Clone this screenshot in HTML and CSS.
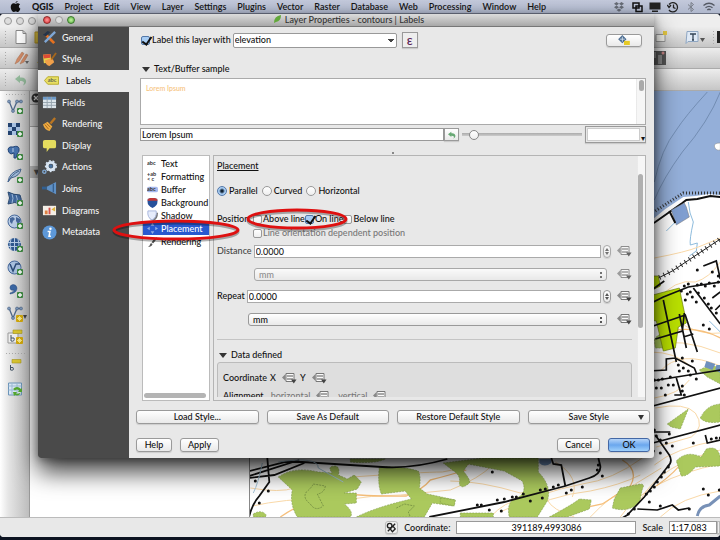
FILE: index.html
```html
<!DOCTYPE html>
<html lang="en">
<head>
<meta charset="utf-8">
<title>Layer Properties - contours | Labels</title>
<link rel="stylesheet" href="styles.css">
</head>
<body>
<svg class="defs" aria-hidden="true">
  <defs>
    <symbol id="plus" viewBox="0 0 6 6"><rect width="6" height="6" rx="1" fill="#3f8a43"/><path d="M3 1v4M1 3h4" stroke="#fff" stroke-width="1.4"/></symbol>
    <symbol id="star" viewBox="0 0 7 7"><rect width="7" height="7" rx="1" fill="#d3a90c"/><path d="M3.5 1v5M1 3.5h5M2 2l3 3M5 2l-3 3" stroke="#fff6a0" stroke-width=".8"/></symbol>
    <symbol id="override" viewBox="0 0 16 14"><path d="M5 2.500h8v8H5z" fill="#fafafa" stroke="#777"/><path d="M4.500 3v7L1 6.500z" fill="#888"/><path d="M6 5h6M6 8h6" stroke="#555"/><path d="M10 8.500h5.500L12.800 12.500z" fill="#444"/></symbol>
    <symbol id="vnode" viewBox="0 0 16 16"><path d="M2 2l4 10L10 2.500h4" fill="none" stroke="#50698c" stroke-width="1.300"/><g fill="#7d98ba" stroke="#3c5476" stroke-width=".5"><circle cx="2" cy="2.500" r="1.500"/><circle cx="6" cy="12" r="1.500"/><circle cx="10" cy="2.500" r="1.500"/><circle cx="14" cy="2.500" r="1.500"/></g></symbol>
    <symbol id="globe" viewBox="0 0 16 16"><circle cx="7.500" cy="7.500" r="6.500" fill="#b9cde6" stroke="#47699c"/><path d="M3 4l3-1 2 2-2 2-1 3-2-2zM9 3l4 2v3l-2 2-2-3z" fill="#47699c"/></symbol>
    <symbol id="undo" viewBox="0 0 14 12"><path d="M1 5l5-4v2.500c7-1 8 6 3 8 2-3 1-4.500-3-4.500V9z" fill="#67a874"/></symbol>
  </defs>
</svg>

<nav class="menubar">
  <svg class="apple" viewBox="0 0 12 12"><path d="M8.500 0C8 1 7 2 6 2.200 6 1 7 .2 8.500 0zM6 3c1 0 1.500-.7 2.800-.6C10 2.500 10.500 3 11 3.600 9 5 9.300 7.500 11.300 8.400 10.600 10 9.700 12 8.500 12 7.500 12 7.200 11.400 6.200 11.400S4.800 12 4 12C2.400 12 .8 8.800.8 6.600.8 4 2.300 2.500 4 2.500 5 2.500 5.500 3 6 3z" fill="#111"/></svg>
  <a class="app" href="#">QGIS</a><a href="#">Project</a><a href="#">Edit</a><a href="#">View</a><a href="#">Layer</a><a href="#">Settings</a><a href="#">Plugins</a><a href="#">Vector</a><a href="#">Raster</a><a href="#">Database</a><a href="#">Web</a><a href="#">Processing</a><a href="#">Window</a><a href="#">Help</a>
  <span class="tray">
    <svg viewBox="0 0 12 12"><path d="M3.500 1L6 2.700 3.500 4.500 1 2.800zM8.500 1L11 2.800 8.500 4.500 6 2.700zM3.500 4.500L6 6.200 3.500 8 1 6.200zM8.500 4.500L11 6.200 8.500 8 6 6.200zM6 7.500l2.500 1.500L6 10.800 3.500 9z" fill="#666b75"/></svg>
    <svg viewBox="0 0 12 12"><path d="M2 2h6v5H2zM5 5h6v5.500H5z" fill="none" stroke="#111" stroke-width="1.500"/></svg>
    <svg viewBox="0 0 12 12"><path d="M.5 1.500h11v7H.5zM3 9.500h6V11H3z" fill="#222"/></svg>
    <svg viewBox="0 0 12 12"><path d="M2 3.500A4.700 4.700 0 1 1 2 9M.2 4L2 6.500 4 4M6.500 3.500v3l2 1" fill="none" stroke="#222" stroke-width="1.300"/></svg>
    <svg viewBox="0 0 12 12"><path d="M3 3.500l5.500 5L6 10.500v-9L8.500 3.500 3 8.500" fill="none" stroke="#777c86"/></svg>
    <svg viewBox="0 0 12 12"><path d="M.5 4.500q5.500-4.500 11 0M2.500 6.800q3.500-3 7 0M4.300 9q1.700-1.500 3.400 0" fill="none" stroke="#555a64" stroke-width="1.300"/></svg>
  </span>
</nav>

<div class="appwin">
  <div class="apptitle"><i class="light"></i><i class="light"></i><i class="light"></i></div>
  <div class="bar">
    <i class="grip"></i>
    <svg width="14" height="16" viewBox="0 0 14 16"><path d="M2 1.500h7l3 3v10H2z" fill="#fff" stroke="#888"/><path d="M9 1.500v3h3" fill="none" stroke="#888"/></svg>
    <svg width="14" height="14" viewBox="0 0 14 14"><path d="M1 2h5l1 2h6v9H1z" fill="#e5c944" stroke="#b99a25"/></svg>
    <span class="push"></span>
    <svg width="14" height="14" viewBox="0 0 14 14"><path d="M2 4.500h9v7H2z" fill="#f4f4f0" stroke="#999"/><path d="M9 1h4v4H9z" fill="#e5c944"/></svg>
    <svg class="text-tool" width="22" height="16" viewBox="0 0 22 16"><path d="M3 2.500h11v10H4l-2 2z" fill="#dfe9f5" stroke="#8ea6c2"/><path d="M6 5h6M9 5v6M8 11h2" stroke="#345" stroke-width="1.300"/><path d="M16 9h5l-2.500 4z" fill="#555"/></svg>
    <i class="grip"></i><i class="dark-chip"></i>
  </div>
  <div class="bar">
    <i class="grip"></i>
    <svg width="16" height="14" viewBox="0 0 16 14"><path d="M1 13l2-5 5-7 2 1.500-5 8zM6 13l2-4 4-6 2 1-4 7z" fill="#d58d69" stroke="#a97455" stroke-width=".5"/><path d="M11 10h4l-2 3z" fill="#666"/></svg>
    <svg width="10" height="14" viewBox="0 0 10 14"><path d="M1 12l6-8 2 8z" fill="#cdb84a"/></svg>
    <span class="push"></span>
    <svg class="raster-tool" width="16" height="14" viewBox="0 0 16 14"><path d="M0 0h16v14H0z" fill="#555"/><path d="M2 1h4v6H2zM8 4h4v9H8z" fill="#8a8a8a"/><circle cx="13" cy="2" r="1.500" fill="#c88"/></svg>
  </div>
  <div class="bar">
    <i class="grip"></i>
    <svg class="faded" width="14" height="12"><use href="#undo"/></svg>
  </div>

  <div class="workspace">
    <div class="strip">
      <i class="hgrip"></i>
      <svg viewBox="0 0 16 16"><use href="#vnode"/><use href="#plus" x="10" y="9" width="6" height="6"/></svg>
      <svg viewBox="0 0 16 16"><path d="M1 1h12v12H1z" fill="#a9c3e4"/><path d="M1 1h4v4H1zM9 1h4v4H9zM5 5h4v4H5zM1 9h4v4H1zM9 9h4v4H9z" fill="#23426f"/><use href="#plus" x="10" y="9" width="6" height="6"/></svg>
      <svg viewBox="0 0 16 16"><path d="M1 4q1-3 5-2 5-2 6 1.500.6 4-1.500 4.500L9 13H7V8L4 9Q1 8 1 4z" fill="#4773ad" stroke="#27497a"/><path d="M6 3v4" stroke="#b5cbe6"/><use href="#plus" x="10" y="9" width="6" height="6"/></svg>
      <svg viewBox="0 0 16 16"><path d="M1 14Q2 4 14 1 13 8 4 10z" fill="#a4bddb" stroke="#46658f"/><path d="M1 14Q5 6 12 3" fill="none" stroke="#46658f"/><use href="#plus" x="10" y="9" width="6" height="6"/></svg>
      <svg viewBox="0 0 16 16"><path d="M1 1q6 3 12 3 2 4 1 9-6-3-13 0 3-6 0-12z" fill="#41679c" stroke="#294870"/><path d="M5 3q2 4 0 9M9 4q2 4 1 8" fill="none" stroke="#9db8da"/><use href="#plus" x="10" y="9" width="6" height="6"/></svg>
      <svg viewBox="0 0 16 16"><use href="#globe"/><use href="#plus" x="10" y="9" width="6" height="6"/></svg>
      <svg viewBox="0 0 16 16"><circle cx="7.500" cy="7.500" r="6.500" fill="#2f588f"/><path d="M1 5.500h13M1 9.500h13M7.500 1v13M4 2q-2 5 0 11M11 2q2 5 0 11" fill="none" stroke="#b6cbe5"/><use href="#plus" x="10" y="9" width="6" height="6"/></svg>
      <svg viewBox="0 0 16 16"><circle cx="7.500" cy="7.500" r="6.500" fill="#a9c1df" stroke="#47699c"/><path d="M3 4l3 7 3-7h4" fill="none" stroke="#2b4a78" stroke-width="1.500"/><use href="#plus" x="10" y="9" width="6" height="6"/></svg>
      <svg viewBox="0 0 16 16"><path d="M3 10q4-1 4-3Q3 8 3 4.500 3 2 6 1.500 9.500 1.500 10 5q0 5-7 6z" fill="#3b66a3" stroke="#27497a" stroke-width=".5"/><use href="#plus" x="10" y="9" width="6" height="6"/></svg>
      <svg class="has-menu" viewBox="0 0 16 16"><use href="#vnode"/><use href="#star" x="9" y="9" width="7" height="7"/><path d="M16 9h4l-2 4z" fill="#444"/></svg>
      <svg viewBox="0 0 16 16"><path d="M1 4h10v10H1z" fill="#eee" stroke="#999"/><path d="M6 1h9v3.500H6z" fill="#d9c530" stroke="#a4951f" stroke-width=".6"/><path d="M4 6v6q4 1 3-3H4" fill="none" stroke="#456"/><use href="#star" x="9" y="8" width="7" height="7"/></svg>
      <i class="hgrip"></i>
      <svg viewBox="0 0 16 16"><path d="M5 1.500h9v3.500H5z" fill="#d9c530" stroke="#a4951f" stroke-width=".6"/><path d="M3.500 7v5q4 1 2.500-2.500H3.500" fill="none" stroke="#456"/></svg>
      <svg viewBox="0 0 16 16"><path d="M1.500 2h13v12h-13z" fill="#d9e8f6" stroke="#6c94b8"/><path d="M1.500 5h13M1.500 9h13M5 2v12M10 2v12" stroke="#9dbbd5"/><path d="M6 8q4-4 8 0l1-1v4h-4l1-1.500q-2-2-4 0zM6 11h4l-1 1.500q3 .5 5-1-2 4-6 2.500l-1 1z" fill="#55a92f"/></svg>
    </div>
    <div class="layers">
      <div class="layers-head"><svg width="10" height="10" viewBox="0 0 10 10"><circle cx="5" cy="5" r="4.500" fill="#333"/><path d="M3 3l4 4M7 3L3 7" stroke="#eee" stroke-width="1.300"/></svg></div>
      <div class="layers-tools"></div>
      <div class="layers-rows"></div>
      <div class="layers-group">▼</div>
    </div>
    <div class="map">
      <svg viewBox="249 91 471 426" preserveAspectRatio="xMaxYMax slice" role="img" aria-label="Map canvas">
        <path d="M249 91h471v426H249z" fill="#fff"/>
        <path d="M640 91h80v104l-12-1-13 2-12 1-18 12-11 9-20 12z" fill="#94afd9"/>
        <g fill="none" stroke="#6a84a8" stroke-width=".8"><path d="M707 92q-22 24-31 38-15 19-22 52"/><path d="M720 92q-12 30-38 60-19 26-28 48"/></g>
        <path d="M720 143q-6 0-6 3 1 5 6 4z" fill="#fff" stroke="#888" stroke-width=".5"/>
        <path d="M655 211l17-11 11-7h37" fill="none" stroke="#333" stroke-width="3" stroke-dasharray="1 2"/>
        <path d="M645 228l10-6 27-19 4-3 11-1 13-3 10 1" fill="none" stroke="#111" stroke-width="2"/>
        <path d="M671 210l13-7 2 4 3 10-13 8z" fill="#7f9ed0" stroke="#777" stroke-width=".5"/><path d="M669 211l6 12" stroke="#111" stroke-width="2"/>
        <g fill="none" stroke="#8dbbdc" stroke-width="1"><path d="M688 202q1 12 5 20-4 18-3 23l7-2-1 8-7 5"/><path d="M674 223l-8 8M709 321l11 11"/></g>
        <g fill="none" stroke="#fad9a8" stroke-width="1">
          <path d="M654 258q32-6 44-11l22-9M655 302q20-24 40-20 14-4 25-20M650 318q25-7 35 8 18 9 35 7M650 345q30-8 70 8M650 352q25 0 40 14M655 408q30-6 40 5 10 14-4 24l-35 10M660 371q20-22 60-5M654 398q25-4 35-18M654 465q20-17 66-25M640 500q20-36 80-50M620 517q25-38 100-53M660 517q20-20 60-26M590 517q20-22 45-33l26-16M250 488q30 5 44 0l58-2M252 506q30-7 77-8M300 512q40-16 100-17l50-5q30-12 42-25M352 477q70-5 90-5 30-5 30-12M450 481q30 0 70 12 20-5 27 7 5 10 27 17M555 462q25 15 17 35M500 512q40-20 82-28 30-4 60-26M510 517q40-22 80-26 30-6 50-16M490 517q15-16 30-17"/>
        </g>
        <g fill="none" stroke="#f6bf7b" stroke-width="1.300"><path d="M675 330q25-3 45 8M336 493q40 4 70 3 17-7 24-16 16-4 36-10M656 486q20-14 29-28M622 460q17 10 8 26l-28 18-38 8M280 517q20-14 45-20"/></g>
        <path d="M650 282l22-11 48-32" fill="none" stroke="#222" stroke-width="1"/><path d="M650 282l22-11 48-32" fill="none" stroke="#333" stroke-width="5" stroke-dasharray="1 4"/>
        <g fill="#abc95d" stroke="#7f9b48" stroke-width=".6" stroke-dasharray="2 1">
          <path d="M278 477q15-11 40-5l14 1q-6-7 3-7 5 1 3 9l9 4 7-4 7 7-4 7-13 4h12v10l-12 1q10 8 6 13H297q-8-13-5-27z"/>
          <path d="M379 467q22-1 39 4 3 6 1 17l8 6 28 6-2 6-21-3 -8 14h-68q20-10 55-18l-6-8-24 3q-4-10-2-27z"/>
          <path d="M443 463l40-5h55v14q14 14 9 29l-10 16h-28q-3-12 4-18 15-4 9-18l-18-10-36-7-5 7q8 10 6 12-8 7-10 1 2-9-7-14z"/>
          <path d="M620 488l20-4q5 0 2 5l-3 14q-12 10-27 5l2-9zM549 517q24-13 30-18l12 1-2 9-22 8zM440 498l15 2-1 6-14-3zM253 514q8-5 13 1l-1 2h-12zM460 513h33v4h-33zM350 459h35q-10 5-35 3z"/>
          <path d="M667 424l21-15-8 20-9-2zM676 461q10-11 25-4l5-8q12-4 14 9v8l-25 1q-8 10-14 9zM700 418q6-13 20-14v18q-15 2-20-4zM654 340q5-10 13-1l-3 9h-9zM699 370q15-8 21 0v14l-13-7z"/>
        </g>
        <path d="M313 484l12 2q-1 7-8 8l6 12q-8 6-13-2-8-6-4-12 5-4 7-8zM396 508l8-4 10 2-6 6 2 5" fill="none" stroke="#68823c" stroke-width=".7" stroke-dasharray="2 1"/>
        <path d="M539 459h12v4q-7 5-12 0zM706 361l9 3-3 6-8-3zM716 365h4v8l-5-3z" fill="#6f91bd"/>
        <path d="M650 276h8l2 10-10 5zM645 297l34-9 5 24 2 11-8 4-3 21-12 3-7-30-10-2z" fill="#b9df00" stroke="#70800d" stroke-width=".7"/>
        <g fill="none" stroke="#111" stroke-width="1.700">
          <path d="M650 291l14-10M645 306l18-9 25-10 32-5M663 300l13 62M650 327l35-12 12 37M684 313l-2 18-27 8M679 314l7 34M683 337l10-3M648 371l18-1v-11l9-1 19 10 2 5M645 382l50-8 25-4M645 408l75-20M645 445l75-20M676 378l5 17h-7M645 432h25M655 435l14 20q4 7-2 12l-23 30-17 18-5 3M637 509l20 1 15-5 6 5 11-2M705 435l2 8 13-3M693 288l27 36M703 266l13-5 4 18M712 298l8-6M715 310l5-5"/>
        </g>
        <g fill="none" stroke="#111" stroke-width="1.800">
          <path d="M249 471l36-9h17l80 5q30 2 65-8M249 476l50-16M249 478l25-3 30-12M267 458l2 24-10 14q-7 8-10 20M429 517l75-15 61-16 24-8q12-4 11-12l-2-8M551 458l2 6 8 1 4 21"/>
        </g>
        <path d="M697 516q2-10 12-11l11-9" fill="none" stroke="#7891b7" stroke-width="3"/>
        <path d="M278 462q40-6 40 6l25 14M262 463q-4 20-9 30" fill="none" stroke="#a5c5d8"/>
        <g fill="none" stroke="#111" stroke-width="3" stroke-linecap="round">
          <path d="M255 481h0M268 491h0M259 503h0M492 472h0M477 505h0M481 505h0M489 510h0M497 500h0M504 499h0M501 511h0M512 497h0M516 497h0M523 494h0M530 501h0M540 490h0M545 489h0M553 487h0M558 485h0M542 498h0M566 493h0M571 490h0M582 487h0M602 476h0M597 470h0M598 465h0"/>
          <path d="M684 286h0M688 284h0M697 285h0M701 284h0M705 286h0M709 283h0M714 286h0M718 282h0M681 291h0M687 294h0M692 297h0M696 302h0M685 300h0M704 298h0M708 304h0M711 308h0M716 313h0M690 292h0M698 293h0M703 325h0M709 329h0M692 361h0M682 358h0M678 365h0M683 368h0M688 371h0M679 371h0M690 375h0M696 379h0M654 380h0M658 380h0M662 379h0M670 377h0M656 388h0M661 388h0M668 385h0M673 385h0M682 386h0M682 391h0M665 395h0M684 395h0M654 430h0M656 436h0M660 440h0M666 443h0M672 446h0M669 434h0M653 451h0M660 453h0M693 443h0M711 439h0M716 438h0M720 438h0M668 467h0M664 472h0M661 477h0M657 482h0M654 487h0M650 491h0M646 494h0M649 502h0M634 509h0M628 514h0M660 506h0M689 509h0M703 489h0M708 495h0M719 490h0M697 270h0M712 272h0M718 276h0"/>
        </g>
      </svg>
    </div>
  </div>
  <div class="status">
    <button class="extent" aria-label="Toggle extents"><svg viewBox="0 0 12 12"><circle cx="4" cy="4" r="2.500" fill="none" stroke="#222" stroke-width="1.500"/><path d="M2 10l8-8M5 8l2 2.500 3-3L8 5" fill="none" stroke="#222" stroke-width="1.500"/></svg></button>
    <label for="coord">Coordinate:</label><input id="coord" value="391189,4993086">
    <label for="scale">Scale</label><input id="scale" value="1:17,083"><button class="scale-drop" aria-label="Scales"></button>
  </div>
</div>

<section class="dialog">
  <header class="dialog-title"><i class="light red"></i><i class="light"></i><i class="light green"></i>
    <h1><svg width="9" height="10" viewBox="0 0 9 10"><path d="M1 9Q1 2 8 1 8 7 3 8z" fill="#62a83a"/></svg>Layer Properties - contours | Labels</h1></header>
  <div class="dialog-body">
    <ul class="sidebar">
      <li><svg viewBox="0 0 16 16"><path d="M3 4l10 10" stroke="#e57120" stroke-width="3"/><path d="M14 2L3 13" stroke="#7fa7d5" stroke-width="2.500"/><path d="M1 5l5-4 3 1-5 5z" fill="#24344a"/></svg>General</li>
      <li><svg viewBox="0 0 16 16"><path d="M1 3l8-1 1 9-8 1z" fill="#e8d34a"/><path d="M1 3l8-1v4L2 7z" fill="#dc4b36"/><path d="M3 9l8-3 2 5-5 4q-4-1-5-6z" fill="#f0a04a"/><path d="M10 8l5-7" stroke="#a5671d" stroke-width="2"/></svg>Style</li>
      <li class="current"><svg viewBox="0 0 16 16"><path d="M4 4h11.500v8H4L.5 8z" fill="#e8df62" stroke="#b8aa2c"/><text x="4" y="10" class="tag">abc</text></svg>Labels</li>
      <li><svg viewBox="0 0 16 16"><path d="M1 2h14v12H1z" fill="#dde5ea"/><path d="M1 2h14v3H1z" fill="#6d9ac8"/><path d="M1 8h14M1 11h14M5.500 2v12M10 2v12" stroke="#95a3ad"/></svg>Fields</li>
      <li><svg viewBox="0 0 16 16"><path d="M9 7l5-6" stroke="#b97522" stroke-width="2.500"/><path d="M1 8l5-3 5 5-3 5Q3 14 1 8z" fill="#edab42"/><path d="M3 8l4 5M5 7l4 4" stroke="#a8661c"/></svg>Rendering</li>
      <li><svg viewBox="0 0 16 16"><path d="M3 2h10q2 0 2 2v5q0 2-2 2H8l-3 4v-4H3q-2 0-2-2V4q0-2 2-2z" fill="#e5dc5e"/></svg>Display</li>
      <li><svg viewBox="0 0 16 16"><circle cx="9.500" cy="6.500" r="4" fill="none" stroke="#d8e5f3" stroke-width="3"/><circle cx="9.500" cy="6.500" r="5.700" fill="none" stroke="#d8e5f3" stroke-width="1.500" stroke-dasharray="2 2"/><circle cx="9.500" cy="6.500" r="2" fill="#49729f"/><circle cx="2.500" cy="12.500" r="1.700" fill="none" stroke="#7fa6d0" stroke-width="1.500"/></svg>Actions</li>
      <li><svg viewBox="0 0 16 16"><path d="M15 1v13L5 9V6z" fill="#5e8fc4"/><path d="M12 3v9" stroke="#254c78"/><path d="M0 6h5v3H0z" fill="#315f91"/></svg>Joins</li>
      <li><svg viewBox="0 0 16 16"><path d="M1 3h14v10H1z" fill="#f4eee6"/><path d="M3 8h3v4H3z" fill="#df8244"/><path d="M7 5h2v7H7z" fill="#d6514a"/><path d="M10 7l4-3v5z" fill="#dfb441"/></svg>Diagrams</li>
      <li><svg viewBox="0 0 16 16"><circle cx="8" cy="8" r="7.500" fill="#5d98d8"/><path d="M6 7h2.500L7.500 12H9.500" fill="none" stroke="#fff" stroke-width="1.600"/><circle cx="9" cy="4" r="1.300" fill="#fff"/></svg>Metadata</li>
    </ul>
    <form class="main" onsubmit="return false">
      <div class="layer-row">
        <input type="checkbox" id="label-layer" checked><label for="label-layer">Label this layer with</label>
        <select class="drop" aria-label="Label field"><option>elevation</option></select>
        <button class="expr" aria-label="Expression">ε</button>
        <button class="engine" aria-label="Placement engine settings"><svg width="14" height="12" viewBox="0 0 14 12"><path d="M5 0l5 5-5 5-5-5z" fill="#47698f"/><path d="M5 2v6M2 5h6" stroke="#dce7f2"/><path d="M7 7h7v5H7z" fill="#e5c925"/></svg></button>
      </div>
      <h2 class="group-title">Text/Buffer sample</h2>
      <div class="preview"><span>Lorem Ipsum</span><i class="thumb"></i></div>
      <div class="sample-row">
        <input type="text" class="sample" value="Lorem Ipsum" aria-label="Sample text"><button class="reset" aria-label="Reset"><svg width="10" height="8" viewBox="0 0 14 12"><use href="#undo"/></svg></button>
        <input type="range" min="0" max="100" value="6" aria-label="Sample size">
        <button class="color" aria-label="Background colour"><i></i>▾</button>
      </div>
      <div class="splitter"></div>
      <div class="split">
        <ul class="pages">
          <li><svg viewBox="0 0 12 12"><text x="0" y="8" class="mini">abc</text></svg>Text</li>
          <li><svg viewBox="0 0 12 12"><text x="0" y="5" class="mini">+ab</text><text x="0" y="11" class="mini">&lt; c</text></svg>Formatting</li>
          <li><svg viewBox="0 0 12 12"><rect y="3" width="12" height="6" rx="2" fill="#a7b9ee"/><text x="0" y="8" class="mini">abc</text></svg>Buffer</li>
          <li><svg viewBox="0 0 12 12"><path d="M1 2q2 0 2-1h6q0 1 2 1 2 7-5 10Q-1 9 1 2z" fill="#26509a"/><path d="M1 2q2 0 2-1h6q0 1 2 1l.5 2H.6z" fill="#c13737"/></svg>Background</li>
          <li><svg viewBox="0 0 12 12"><path d="M2 3h10q0 7-5 9-5-2-5-6z" fill="#777"/><path d="M1 1h9q1 7-4.500 10Q0 8 1 1z" fill="#e6ecfb" stroke="#a5b4dc"/></svg>Shadow</li>
          <li class="current"><svg viewBox="0 0 12 12"><path d="M6 0l2 3H4zM6 12l2-3H4zM0 6l3-2v4zM12 6L9 4v4z" fill="#91aee3"/></svg>Placement</li>
          <li><svg viewBox="0 0 12 12"><path d="M11 1Q6 4 5 7l2 1q3-3 4-7zM4 8q2 0 2 1-1 3-5 3 2-1 3-4z" fill="#555"/></svg>Rendering</li>
          <li class="hscroll"></li>
        </ul>
        <div class="panel">
          <div class="fields">
            <h3>Placement</h3>
            <div class="row modes">
              <label><input type="radio" name="mode" checked>Parallel</label><label><input type="radio" name="mode">Curved</label><label><input type="radio" name="mode">Horizontal</label>
            </div>
            <div class="row position"><span class="cap">Position</span>
              <label><input type="checkbox">Above line</label><label><input type="checkbox" checked>On line</label><label><input type="checkbox">Below line</label>
            </div>
            <div class="row orient off"><label><input type="checkbox" disabled>Line orientation dependent position</label></div>
            <div class="row distance off"><label for="dist">Distance</label><input id="dist" type="text" value="0.0000"><button class="spin" aria-label="Step distance"></button><svg class="ovr"><use href="#override"/></svg></div>
            <div class="row unit off"><select aria-label="Distance unit" class="wide first"><option>mm</option></select><svg class="ovr"><use href="#override"/></svg></div>
            <div class="row repeat"><label for="rep">Repeat</label><input id="rep" type="text" value="0.0000"><button class="spin" aria-label="Step repeat"></button><svg class="ovr"><use href="#override"/></svg></div>
            <div class="row unit"><select aria-label="Repeat unit" class="wide"><option>mm</option></select><svg class="ovr"><use href="#override"/></svg></div>
            <hr>
            <h2 class="group-title inner">Data defined</h2>
            <div class="defined">
              <div class="row"><span>Coordinate</span><span>X</span><svg class="ovr"><use href="#override"/></svg><span>Y</span><svg class="ovr"><use href="#override"/></svg></div>
              <div class="row align"><span>Alignment</span><span class="dim">horizontal</span><svg class="ovr"><use href="#override"/></svg><span class="dim">vertical</span><svg class="ovr"><use href="#override"/></svg></div>
            </div>
          </div>
          <div class="vscroll"><i></i></div>
        </div>
      </div>
      <div class="styles"><button>Load Style...</button><button>Save As Default</button><button>Restore Default Style</button><button class="more">Save Style</button></div>
      <div class="actions"><button>Help</button><button>Apply</button><span class="push"></span><button>Cancel</button><button class="ok">OK</button></div>
    </form>
  </div>
  <svg class="marks" width="330" height="30" viewBox="0 0 330 30" aria-hidden="true">
    <g fill="none" stroke="#000" stroke-opacity=".3" stroke-width="3"><ellipse cx="68" cy="18" rx="62" ry="9"/><ellipse cx="189" cy="7" rx="49" ry="9"/></g>
    <g fill="none" stroke="#de1010" stroke-width="3"><ellipse cx="68" cy="16" rx="62" ry="9"/><ellipse cx="189" cy="5" rx="49" ry="9"/></g>
  </svg>
</section>
</body>
</html>
```

FILE: styles.css
```css
* { box-sizing: border-box; }
body, h1, h2, h3, ul, form { margin: 0; padding: 0; }
body {
  height: 100vh;
  display: flex;
  flex-direction: column;
  position: relative;
  overflow: hidden;
  background: #0c1220;
  color: #111;
  font: 500 9px/12px Lato, "Open Sans", sans-serif;
}
ul { list-style: none; }
input, button, select { font: inherit; color: inherit; margin: 0; }
svg { display: block; flex: none; }
.defs { position: absolute; width: 0; height: 0; }
.push { flex: 1; }

/* menu bar */
.menubar {
  height: 14px;
  flex: none;
  display: flex;
  align-items: center;
  gap: 11px;
  padding: 0 5px 0 10px;
  background: linear-gradient(#c3c9db, #b0b8cd);
  border-bottom: 1px solid #6c7384;
}
.menubar a { color: #151515; text-decoration: none; font-weight: 600; }
.menubar .app { font-weight: 900; }
.apple { width: 11px; height: 11px; }
.tray { margin-left: auto; display: flex; gap: 6px; }
.tray svg { width: 12px; height: 12px; }

/* application window */
.appwin {
  flex: 1;
  min-height: 0;
  display: flex;
  flex-direction: column;
  margin-bottom: 3px;
  border-radius: 4px;
  overflow: hidden;
  background: #e8e8e8;
}
.apptitle, .dialog-title { display: flex; align-items: center; height: 13px; gap: 4px; flex: none; }
.apptitle { padding-left: 4px; background: #eee; }
.light {
  width: 8px;
  height: 8px;
  border-radius: 50%;
  border: 1px solid #999;
  background: #ddd;
}
.red { background: radial-gradient(#f99, #d8272b); border-color: #8d2b2b; }
.green { background: radial-gradient(#c3f5a0, #52a83a); border-color: #3b7a2d; }
.bar {
  height: 21px;
  flex: none;
  display: flex;
  align-items: center;
  gap: 6px;
  padding: 0 0 0 4px;
  background: linear-gradient(#ededed, #c6c6c6);
  border-bottom: 1px solid #aaa;
}
.bar + .bar + .bar { height: 22px; }
.grip { width: 4px; height: 15px; background: radial-gradient(circle, #aaa 1px, transparent 1px) 0 0 / 3px 3px; }
.hgrip { width: 20px; height: 4px; background: radial-gradient(circle, #aaa 1px, transparent 1px) 0 0 / 3px 3px; }
.text-tool { margin-left: 10px; }
.dark-chip { width: 3px; height: 12px; margin-left: -5px; background: #222; }
.raster-tool { margin-right: 54px; }
.faded { opacity: .6; }
.workspace { flex: 1; min-height: 0; display: flex; }
.strip {
  width: 30px;
  display: flex;
  flex-direction: column;
  align-items: center;
  gap: 7px;
  padding: 2px 0 0;
  background: linear-gradient(90deg, #fff, #e6e6e6 8px, #bdbdbd);
  border-right: 1px solid #999;
}
.strip svg { width: 16px; height: 16px; }
.strip .has-menu { overflow: visible; }
.strip .hgrip { flex: none; margin-bottom: -5px; }
.layers { flex: 219; background: #fff; border-right: 1px solid #888; }
.layers-head { height: 14px; padding: 2px 1px; background: #ccc; border-bottom: 1px solid #999; }
.layers-tools { height: 22px; background: #ddd; border-bottom: 1px solid #aaa; }
.layers-rows { height: 39px; }
.layers-group { height: 12px; padding-left: 2px; background: #c9c9c9; color: #555; }
.map { flex: 471; min-width: 0; }
.map svg { width: 100%; height: 100%; }
.status {
  height: 20px;
  flex: none;
  display: flex;
  align-items: center;
  gap: 6px;
  background: #e8e8e8;
  border-top: 1px solid #bbb;
}
.status input { height: 13px; border: 1px solid #999; background: #fff; padding: 0 1px; min-width: 0; }
#coord { width: 180px; text-align: center; }
#scale { width: 48px; }
.status button { padding: 0; border: 1px solid #bbb; background: #eee; }
.extent { width: 13px; height: 13px; margin-left: auto; }
.extent svg { width: 11px; height: 11px; }
.status .scale-drop { width: 3px; height: 13px; margin-left: -6px; border-radius: 0; }

/* dialog */
.dialog {
  position: absolute;
  left: 38px;
  right: 66px;
  top: 14px;
  bottom: 82px;
  display: flex;
  flex-direction: column;
  border-radius: 0 0 3px 3px;
  background: #e8e8e8;
  box-shadow: 0 14px 24px rgba(0, 0, 0, .75), 0 2px 8px rgba(0, 0, 0, .35);
}
.dialog-title { padding-left: 5px; background: linear-gradient(#dcdcdc, #a8a8a8); border-bottom: 1px solid #777; }
.dialog-title h1 { flex: 1; display: flex; justify-content: center; gap: 3px; padding-right: 36px; font: inherit; color: #333; }
.dialog-body { flex: 1; min-height: 0; display: flex; }
.sidebar {
  width: 91px;
  display: grid;
  grid-template-rows: repeat(10, minmax(0, 1fr));
  align-content: start;
  padding-bottom: 215px;
  background: #4a4a4a;
  border-radius: 0 0 0 3px;
  color: #f4f4f4;
}
.sidebar li { display: flex; align-items: center; gap: 5px; padding-left: 4px; }
.sidebar svg { width: 15px; height: 15px; }
.sidebar .current { background: #e8e8e8; color: #111; padding-left: 6px; gap: 7px; }
.tag { font: 700 6px Lato, sans-serif; fill: #665; }
.mini { font: 700 6px Lato, sans-serif; fill: #333; }
.main { flex: 1; min-width: 0; display: flex; flex-direction: column; padding: 4px 8px 6px 11px; }
button {
  padding: 0;
  border: 1px solid #9a9a9a;
  border-radius: 3px;
  background: linear-gradient(#fff, #f4f4f4 50%, #e9e9e9);
  box-shadow: 0 1px 1px rgba(0, 0, 0, .12);
}
input[type=checkbox], input[type=radio] {
  appearance: none;
  flex: none;
  width: 9px;
  height: 9px;
  border: 1px solid #999;
  border-radius: 2px;
  background: linear-gradient(#fff, #eee);
}
input[type=radio] { width: 10px; height: 10px; border-radius: 50%; }
input[type=checkbox]:checked { background: #a8cdf4; border-color: #5478a8; }
input[type=checkbox]:checked::after {
  content: "";
  display: block;
  width: 4px;
  height: 8px;
  margin: -2px 0 0 2px;
  border: solid #111;
  border-width: 0 2px 2px 0;
  transform: rotate(35deg);
}
input[type=radio]:checked { background: radial-gradient(circle, #123 0 1px, #a8cdf4 3px); border-color: #5478a8; }
.layer-row { height: 18px; flex: none; display: flex; align-items: center; gap: 2px; padding: 0 4px 0 1px; }
.drop {
  appearance: none;
  width: 164px;
  height: 15px;
  padding: 0 1px;
  border: 1px solid #999;
  border-radius: 2px;
  background: conic-gradient(from -30deg at 50% 100%, #444 60deg, transparent 0) calc(100% - 3px) 5px / 6px 5px no-repeat, #fff;
}
.drop { background: linear-gradient(to bottom left, #444 50%, transparent 50%) calc(100% - 5px) 5px / 3px 4px no-repeat, linear-gradient(to bottom right, #444 50%, transparent 50%) calc(100% - 2px) 5px / 3px 4px no-repeat, #fff; }
.expr { width: 16px; height: 16px; margin-left: 3px; border-radius: 0; background: #eee; color: #5b2456; font-size: 13px; line-height: 12px; }
.engine { width: 36px; height: 13px; margin-left: auto; display: grid; place-items: center; }
.engine svg { height: 10px; }
.group-title { display: flex; align-items: center; gap: 4px; height: 14px; flex: none; margin: 13px 0 2px; padding-left: 2px; font: inherit; }
.group-title::before { content: ""; border: 3px solid transparent; border-width: 5px 4px 0; border-top-color: #333; }
.preview {
  height: 47px;
  flex: none;
  display: flex;
  justify-content: space-between;
  padding: 5px 1px 0 5px;
  border: 1px solid #aaa;
  background: linear-gradient(90deg, #fff calc(100% - 9px), #ddd 0, #f6f6f6 calc(100% - 8px));
  color: #f6c27c;
  font-size: 7px;
  line-height: 9px;
}
.thumb { width: 5px; height: 11px; margin-top: -4px; border-radius: 3px; background: #aaa; }
.sample-row { height: 17px; flex: none; display: flex; align-items: center; margin-top: 1px; }
.sample { flex: 1; min-width: 0; height: 13px; padding: 0 1px; border: 1px solid #999; background: #fff; }
.reset { width: 15px; height: 13px; border-radius: 0; display: grid; place-items: center; }
.sample-row input[type=range] { appearance: none; width: 120px; height: 12px; margin: 0 3px; background: linear-gradient(#aaa, #ccc) 0 50% / 100% 3px no-repeat; }
.sample-row input[type=range]::-webkit-slider-thumb { appearance: none; width: 10px; height: 10px; border: 1px solid #888; border-radius: 50%; background: linear-gradient(#fff, #eee); }
.color { width: 61px; height: 17px; display: flex; align-items: end; border-radius: 0; font-size: 8px; line-height: 8px; background: #e8e8e8; }
.color i { flex: 1; align-self: stretch; margin: 1px; background: #fff; border: 1px solid #ccc; }
.splitter { height: 12px; flex: none; background: radial-gradient(circle, #888 1px, transparent 1px) 50% 100% / 4px 4px no-repeat; }
.split { flex: 1; min-height: 0; display: flex; gap: 3px; padding-left: 2px; }
.pages { width: 68px; display: flex; flex-direction: column; padding-top: 1px; border: 1px solid #bbb; background: #fff; }
.pages li { height: 13px; flex: none; display: flex; align-items: center; gap: 3px; padding-left: 4px; }
.pages svg { width: 11px; height: 11px; }
.pages .current { background: #2859cf; color: #fff; }
.pages .hscroll { height: 5px; margin: auto 3px 2px 1px; border-radius: 3px; background: #b4b4b4; }
.panel { flex: 1; min-width: 0; display: flex; border: 1px solid #b4b4b4; }
.fields { flex: 1; min-width: 0; overflow: hidden; margin-bottom: 3px; padding-left: 3px; }
.fields h3 { height: 18px; padding-top: 4px; font: inherit; text-decoration: underline; }
.row { height: 14px; display: flex; align-items: center; gap: 2px; }
.row label { display: flex; align-items: center; gap: 1px; }
.modes { margin-top: 10px; }
.modes, .modes label { gap: 4px; }
.modes label { gap: 2px; }
.position { margin-top: 14px; gap: 0; }
.cap { width: 36px; }
.orient { padding-left: 36px; color: #888; }
.distance { margin-top: 4px; }
.unit { margin-top: 9px; }
.repeat { margin-top: 8px; }
.row input[type=text] { flex: 1; min-width: 0; height: 13px; padding: 0 1px; border: 1px solid #aaa; background: #fff; }
.off label, .off select { color: #777; }
.distance label { color: #444; }
.distance input { color: #222; }
.off button, .off select, .off .ovr { opacity: .8; }
.spin {
  width: 8px;
  height: 13px;
  border-radius: 4px;
}
.spin::before, .spin::after { content: ""; display: block; margin: 1px auto; width: 0; border: 2px solid transparent; border-top: 0; border-bottom: 3px solid #555; }
.spin::after { border-bottom: 0; border-top: 3px solid #555; }
.ovr { width: 16px; height: 14px; margin-left: 3px; }
.wide {
  appearance: none;
  flex: 1;
  min-width: 0;
  height: 13px;
  margin: 0 4px 0 31px;
  padding: 0 4px;
  border: 1px solid #999;
  border-radius: 3px;
  background: conic-gradient(from 150deg at 50% 0, #555 60deg, transparent 0) calc(100% - 3px) 2px / 4px 3px no-repeat, conic-gradient(from -30deg at 50% 100%, #555 60deg, transparent 0) calc(100% - 3px) 7px / 4px 3px no-repeat, linear-gradient(#fff, #e9e9e9);
}
.first { margin-left: 37px; }
hr { height: 1px; margin: 13px 0 0; border: 0; background: #c4c4c4; }
.inner { margin: 8px 0 0; }
.defined { height: 60px; padding: 7px 5px; border: 1px solid #bbb; border-radius: 3px; background: #dedede; }
.defined .row { height: 16px; gap: 3px; }
.defined .ovr { margin-left: 2px; }
.defined .align { margin-top: 2px; }
.dim { color: #777; margin-left: 4px; }
.vscroll { width: 13px; margin-bottom: 3px; background: linear-gradient(90deg, transparent 5px, #ddd 5px, #f6f6f6 6px); }
.vscroll i { display: block; width: 5px; height: 154px; margin: 18px 0 0 6px; border-radius: 3px; background: #b0b0b0; }
.styles { display: grid; grid-template-columns: repeat(4, 1fr); gap: 8px; margin: 9px -4px 0 -4px; }
.styles button, .actions button { height: 14px; line-height: 12px; }
.more { position: relative; }
.more::after { content: ""; position: absolute; right: 5px; top: 4px; border: 3px solid transparent; border-width: 5px 3px 0; border-top-color: #333; }
.actions { display: flex; gap: 8px; margin: 14px -4px 0 -4px; }
.actions button { min-width: 36px; padding: 0 7px; }
.actions .ok { min-width: 42px; border-color: #4468a5; background: linear-gradient(#b5d4f8, #6aa7ee 50%, #9fd0fb); }
.marks { position: absolute; left: 70px; top: 200px; overflow: visible; pointer-events: none; }
```
